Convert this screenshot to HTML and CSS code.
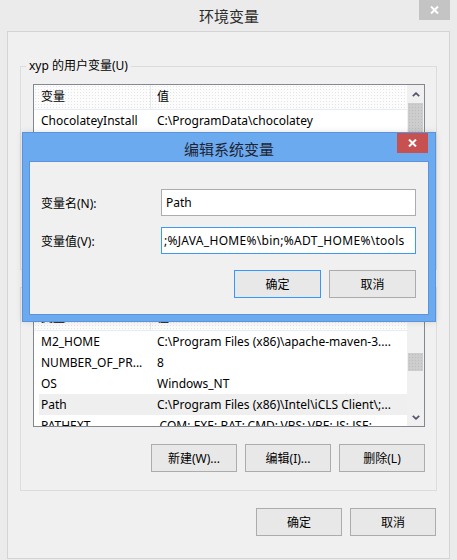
FILE: index.html
```html
<!DOCTYPE html>
<html lang="zh-CN">
<head>
<meta charset="utf-8">
<title>环境变量</title>
<link rel="stylesheet" href="styles.css">
</head>
<body>
<div class="window">
  <div class="titlebar">
    <span class="title">环境变量</span>
    <div class="win-close">
      <svg width="9" height="8" viewBox="0 0 9 8"><path d="M1 0.5 L8 7.5 M8 0.5 L1 7.5" stroke="#fff" stroke-width="2" fill="none"/></svg>
    </div>
  </div>
  <div class="client">
    <div class="group">
      <div class="group-label">xyp 的用户变量(U)</div>
      <div class="list">
        <div class="list-body">
          <div class="list-head"><div class="hcol1">变量</div><div class="hcol2">值</div></div>
          <div class="row"><span>ChocolateyInstall</span><span>C:\ProgramData\chocolatey</span></div>
          <div class="row covered"><span>TEMP</span><span>%USERPROFILE%\AppData\Local\Temp</span></div>
          <div class="row covered"><span>TMP</span><span>%USERPROFILE%\AppData\Local\Temp</span></div>
        </div>
        <div class="scrollbar">
          <div class="sb-btn"><svg width="8" height="5" viewBox="0 0 8 5"><path d="M0.8 4.2 L4 1.2 L7.2 4.2" stroke="#555570" stroke-width="1.8" fill="none"/></svg></div>
          <div class="sb-track"><div class="sb-thumb thumb-user"></div></div>
          <div class="sb-btn"><svg width="8" height="5" viewBox="0 0 8 5"><path d="M0.8 0.8 L4 3.8 L7.2 0.8" stroke="#555570" stroke-width="1.8" fill="none"/></svg></div>
        </div>
      </div>
      <div class="btn-row covered">
        <div class="btn">新建(N)...</div>
        <div class="btn">编辑(E)...</div>
        <div class="btn">删除(D)</div>
      </div>
    </div>
    <div class="group group-sys">
      <div class="group-label covered">系统变量(S)</div>
      <div class="list">
        <div class="list-body">
          <div class="list-head"><div class="hcol1">变量</div><div class="hcol2">值</div></div>
          <div class="row"><span>M2_HOME</span><span>C:\Program Files (x86)\apache-maven-3....</span></div>
          <div class="row"><span>NUMBER_OF_PR...</span><span>8</span></div>
          <div class="row"><span>OS</span><span>Windows_NT</span></div>
          <div class="row selected"><span>Path</span><span>C:\Program Files (x86)\Intel\iCLS Client\;...</span></div>
          <div class="row"><span>PATHEXT</span><span>.COM;.EXE;.BAT;.CMD;.VBS;.VBE;.JS;.JSE;...</span></div>
        </div>
        <div class="scrollbar">
          <div class="sb-btn"><svg width="8" height="5" viewBox="0 0 8 5"><path d="M0.8 4.2 L4 1.2 L7.2 4.2" stroke="#555570" stroke-width="1.8" fill="none"/></svg></div>
          <div class="sb-track"><div class="sb-thumb thumb-sys"></div></div>
          <div class="sb-btn"><svg width="8" height="5" viewBox="0 0 8 5"><path d="M0.8 0.8 L4 3.8 L7.2 0.8" stroke="#555570" stroke-width="1.8" fill="none"/></svg></div>
        </div>
      </div>
      <div class="btn-row">
        <div class="btn">新建(W)...</div>
        <div class="btn">编辑(I)...</div>
        <div class="btn">删除(L)</div>
      </div>
    </div>
    <div class="footer">
      <div class="btn">确定</div>
      <div class="btn">取消</div>
    </div>
  </div>

  <div class="dialog">
    <div class="dlg-title">编辑系统变量</div>
    <div class="dlg-close">
      <svg width="9" height="8" viewBox="0 0 9 8"><path d="M1 0.5 L8 7.5 M8 0.5 L1 7.5" stroke="#fff" stroke-width="2" fill="none"/></svg>
    </div>
    <div class="dlg-content">
      <div class="field">
        <div class="field-label">变量名(N):</div>
        <div class="textbox">Path</div>
      </div>
      <div class="field">
        <div class="field-label">变量值(V):</div>
        <div class="textbox focused">;%JAVA_HOME%\bin;%ADT_HOME%\tools</div>
      </div>
      <div class="dlg-buttons">
        <div class="btn btn-dlg default">确定</div>
        <div class="btn btn-dlg">取消</div>
      </div>
    </div>
  </div>
</div>
</body>
</html>
```

FILE: styles.css
```css
* { box-sizing: border-box; }

body {
  margin: 0;
  background: #ebebeb;
  font-family: "Noto Sans", "Noto Sans CJK SC", sans-serif;
  font-size: 12px;
  color: #000;
}

.window {
  position: relative;
  width: 457px;
  height: 560px;
  background: #ebebeb;
  overflow: hidden;
}

.titlebar {
  position: relative;
  height: 31px;
  display: flex;
  justify-content: center;
  align-items: center;
}

.title {
  font-family: "Noto Sans CJK SC", sans-serif;
  font-size: 15px;
  color: #2b2b2b;
  margin-left: 1px;
}

.win-close {
  position: absolute;
  top: 0;
  right: 7px;
  width: 31px;
  height: 20px;
  background: #c4c4c4;
  display: flex;
  align-items: center;
  justify-content: center;
}

.client {
  margin-left: 7px;
  width: 443px;
  height: 528px;
  border: 1px solid #d4d4d4;
  background: #f0f0f0;
  display: flex;
  flex-direction: column;
}

.group {
  margin: 34px 12px 0 12px;
  border: 1px solid #dcdcdc;
  padding-bottom: 18px;
}

.group-sys {
  margin-top: 17px;
}

.group-label {
  margin: -9px 0 0 5px;
  padding: 0 3px;
  height: 16px;
  line-height: 16px;
  width: fit-content;
  background: #f0f0f0;
}

/* parts that lie fully under the overlay dialog */
.covered {
  visibility: hidden;
}

.list {
  margin: 10px 11px 0 12px;
  height: 122px;
  border: 1px solid #828790;
  background: #fff;
  display: flex;
  overflow: hidden;
}

.list-body {
  flex: 1;
  min-width: 0;
  overflow: hidden;
}

.list-head {
  height: 25px;
  display: flex;
  background-color: #fcfcfc;
  background-image: radial-gradient(circle, #e4e4e4 0.7px, transparent 0.8px);
  background-size: 3px 3px;
  border-bottom: 1px solid #e6ecf3;
}

.hcol1 {
  width: 117px;
  padding-left: 7px;
  line-height: 24px;
  border-right: 1px solid #e8e8e8;
}

.hcol2 {
  padding-left: 6px;
  line-height: 24px;
}

.row {
  margin-left: 5px;
  padding-left: 2px;
  height: 21px;
  line-height: 21px;
  display: grid;
  grid-template-columns: 116px 1fr;
  white-space: nowrap;
  overflow: hidden;
}

.row span {
  overflow: hidden;
}

.row.selected {
  background: #efefef;
}

.scrollbar {
  width: 17px;
  background: #f0f0f0;
  display: flex;
  flex-direction: column;
}

.sb-btn {
  height: 18px;
  display: flex;
  align-items: center;
  justify-content: center;
}

.sb-track {
  flex: 1;
  padding: 0 1px 0 1px;
}

.sb-thumb {
  background-color: #cdcdcd;
  background-image: radial-gradient(circle, #bdbdbd 0.7px, transparent 0.8px);
  background-size: 3px 3px;
}

.thumb-user {
  height: 60px;
}

.thumb-sys {
  margin-top: 29px;
  height: 18px;
}

.btn-row {
  margin: 17px 11px 0 0;
  display: flex;
  justify-content: flex-end;
  gap: 8px;
}

.btn {
  width: 86px;
  height: 28px;
  border: 1px solid #acacac;
  background: #e8e8e8;
  display: flex;
  align-items: center;
  justify-content: center;
}

.footer {
  margin: 17px 13px 0 0;
  display: flex;
  justify-content: flex-end;
  gap: 8px;
}

/* Overlay dialog */
.dialog {
  position: absolute;
  left: 22px;
  top: 132px;
  width: 414px;
  height: 190px;
  border: 1px solid #5a93dc;
  background: #6caaf0;
  padding: 0 6px 6px 6px;
  display: flex;
  flex-direction: column;
  box-shadow: 0 0 6px rgba(0, 0, 0, 0.12);
}

.dlg-title {
  height: 28px;
  padding-top: 3px;
  text-align: center;
  line-height: 26px;
  font-family: "Noto Sans CJK SC", sans-serif;
  font-size: 15px;
  color: #1f2430;
}

.dlg-close {
  position: absolute;
  top: 0;
  right: 7px;
  width: 31px;
  height: 20px;
  background: #c75050;
  display: flex;
  align-items: center;
  justify-content: center;
}

.dlg-content {
  flex: 1;
  border: 1px solid #5a93dc;
  background: #f0f0f0;
  padding: 27px 12px 0 11px;
}

.field {
  display: flex;
  align-items: center;
  margin-bottom: 11px;
}

.field-label {
  width: 120px;
}

.textbox {
  width: 255px;
  height: 27px;
  border: 1px solid #acacac;
  background: #fff;
  padding-left: 4px;
  line-height: 25px;
  white-space: nowrap;
  overflow: hidden;
}

.textbox.focused {
  border-color: #3c9bef;
  padding-left: 2px;
  letter-spacing: 0.3px;
}

.dlg-buttons {
  margin-top: 16px;
  display: flex;
  justify-content: flex-end;
  gap: 8px;
}

.btn-dlg {
  width: 87px;
}

.btn.default {
  border-color: #3399ff;
}
```
